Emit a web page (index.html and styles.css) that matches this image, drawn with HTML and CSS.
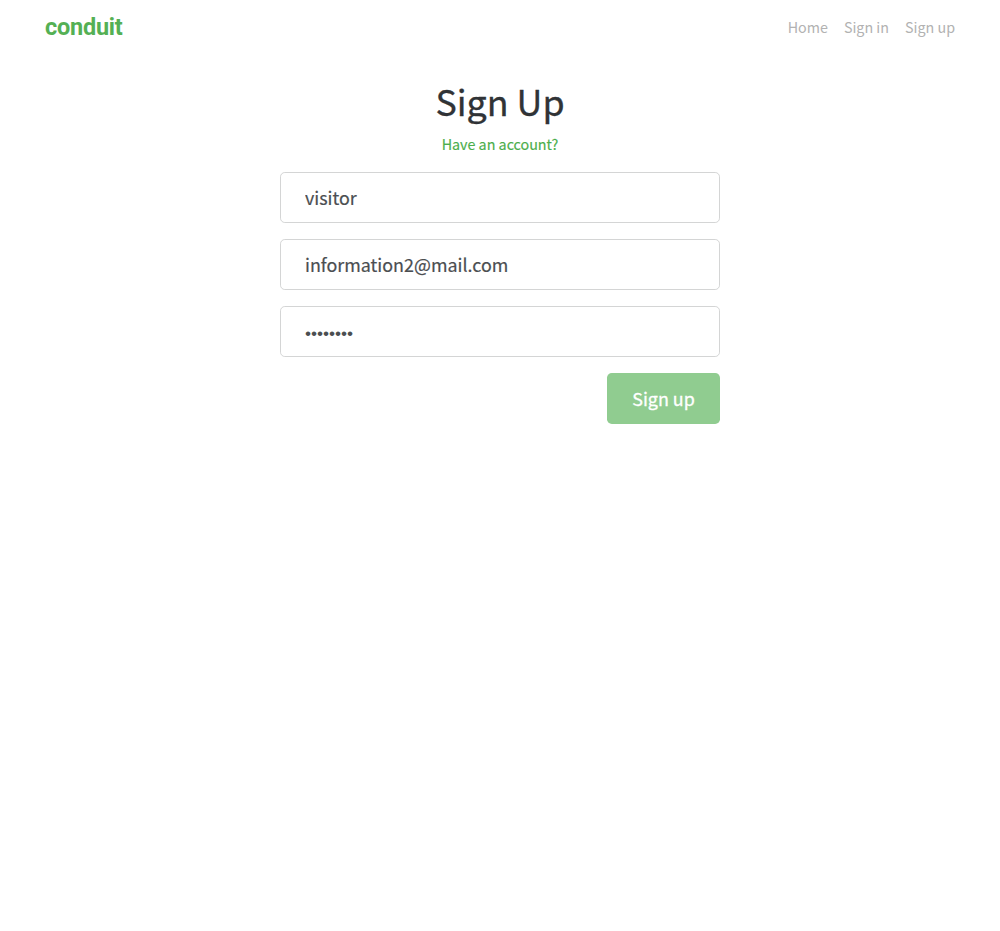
FILE: index.html
```
<!DOCTYPE html>
<html lang="en">
<head>
<meta charset="utf-8">
<title>Conduit</title>
<link rel="stylesheet" href="styles.css">
</head>
<body>
<nav class="navbar">
  <a class="brand" href="#">conduit</a>
  <ul class="nav">
    <li><a href="#">Home</a></li>
    <li><a href="#">Sign in</a></li>
    <li><a href="#">Sign up</a></li>
  </ul>
</nav>
<main class="auth">
  <h1 class="title">Sign Up</h1>
  <p class="hint"><a href="#">Have an account?</a></p>
  <form class="form">
    <input class="field" type="text" value="visitor" aria-label="Username">
    <input class="field" type="text" value="information2@mail.com" aria-label="Email">
    <input class="field password" type="password" value="password" aria-label="Password">
    <button class="submit" type="button" disabled>Sign up</button>
  </form>
</main>
</body>
</html>
```
FILE: styles.css
```
* { box-sizing: border-box; }
body { margin: 0; background: #fff; color: #303336; font: 14.3px/24px "Noto Sans CJK SC", sans-serif; }
a { text-decoration: none; }
.navbar { height: 54px; padding: 0 45px; display: flex; justify-content: space-between; align-items: center; }
.brand { color: #54b054; font: 700 23.5px/36px Roboto, sans-serif; letter-spacing: -0.25px; }
.nav { display: flex; gap: 16px; margin: 0; padding: 0; list-style: none; }
.nav a { color: #b2b2b2; }
.auth { width: 440px; margin: 24px auto 0; }
.title { margin: 0 0 10px; text-align: center; font-size: 35.8px; line-height: 44px; font-weight: 400; -webkit-text-stroke: 0.3px; }
.hint { margin: 0 0 16px; text-align: center; -webkit-text-stroke: 0.15px; }
.hint a { color: #4cae4c; }
.form { display: flex; flex-direction: column; gap: 16px; }
.field { width: 100%; height: 51px; padding: 11px 24px 13px; border: 1px solid #d4d5d5; border-radius: 4.8px; background: #fff; color: #4b4e51; font: 400 17.9px/25px "Noto Sans CJK SC", sans-serif; outline: 0; -webkit-text-stroke: 0.2px; }
.password { padding: 14px 24px 10px; font: 17.2px/25px "Liberation Sans", sans-serif; -webkit-text-stroke: 0; }
.submit { align-self: flex-end; width: 113px; height: 51px; padding: 0; border: 0; border-radius: 4.8px; background: #90cc90; color: #fff; font: 400 17.9px/25px "Noto Sans CJK SC", sans-serif; -webkit-text-stroke: 0.3px; }
```
